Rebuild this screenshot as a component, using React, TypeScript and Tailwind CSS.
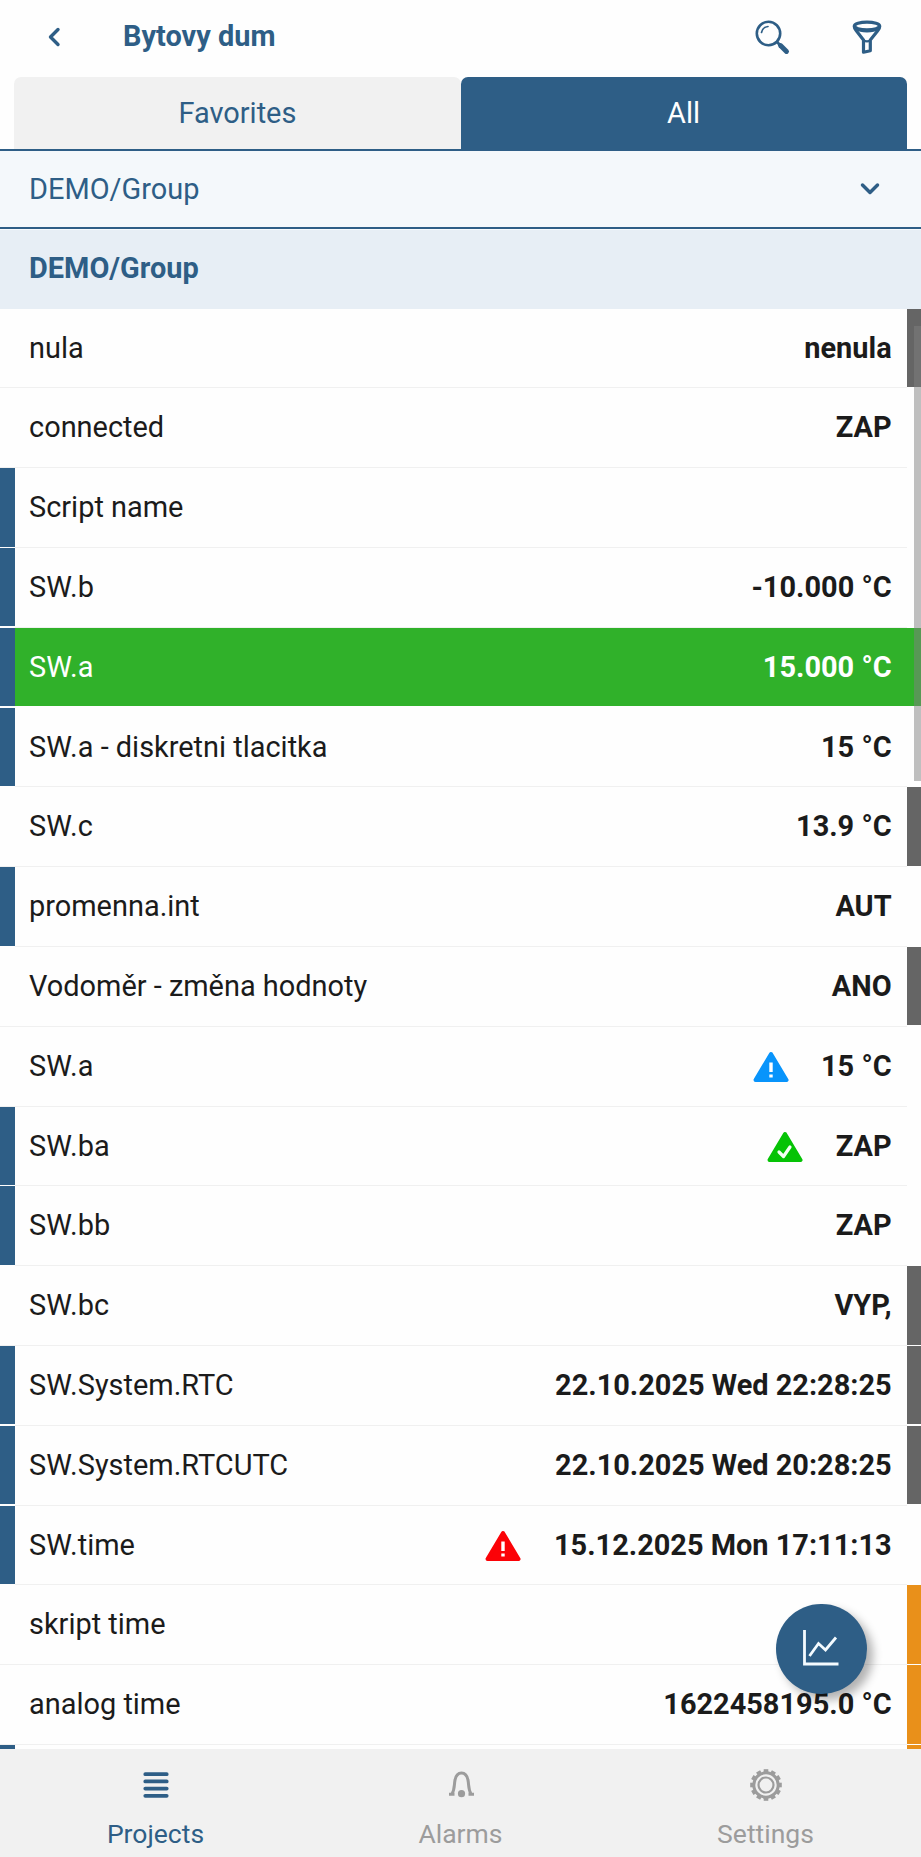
import React from "react";

type Alarm = "info" | "ok" | "alert";
type Row = { name: string; value?: string; left?: boolean; right?: "gray" | "orange"; alarm?: Alarm; active?: boolean };

const rows: Row[] = [
  { name: "nula", value: "nenula", right: "gray" },
  { name: "connected", value: "ZAP" },
  { name: "Script name", left: true },
  { name: "SW.b", value: "-10.000 °C", left: true },
  { name: "SW.a", value: "15.000 °C", left: true, active: true },
  { name: "SW.a - diskretni tlacitka", value: "15 °C", left: true },
  { name: "SW.c", value: "13.9 °C", right: "gray" },
  { name: "promenna.int", value: "AUT", left: true },
  { name: "Vodoměr - změna hodnoty", value: "ANO", right: "gray" },
  { name: "SW.a", value: "15 °C", alarm: "info" },
  { name: "SW.ba", value: "ZAP", left: true, alarm: "ok" },
  { name: "SW.bb", value: "ZAP", left: true },
  { name: "SW.bc", value: "VYP,", right: "gray" },
  { name: "SW.System.RTC", value: "22.10.2025 Wed 22:28:25", left: true, right: "gray" },
  { name: "SW.System.RTCUTC", value: "22.10.2025 Wed 20:28:25", left: true, right: "gray" },
  { name: "SW.time", value: "15.12.2025 Mon 17:11:13", left: true, alarm: "alert" },
  { name: "skript time", right: "orange" },
  { name: "analog time", value: "1622458195.0 °C", right: "orange" },
  { name: "", left: true, right: "orange" },
];

const alarmColors: Record<Alarm, string> = { info: "#0894fb", ok: "#06c306", alert: "#fb0207" };

function AlarmIcon({ kind }: { kind: Alarm }) {
  const color = alarmColors[kind];
  return (
    <svg className="mt-[2px] mr-[32.5px] h-[32px] w-[36px] shrink-0" viewBox="0 0 36 32" fill="none">
      <path d="M18 3 33.500 29H2.500Z" fill={color} stroke={color} strokeWidth="4" strokeLinejoin="round" />
      {kind === "ok" ? (
        <path d="m12 21 4.500 4.500L23 16" stroke="#f4fff4" strokeWidth="3.200" strokeLinecap="round" strokeLinejoin="round" />
      ) : (
        <path d="M18 11.500v9.500M18 23.500v3" stroke="#fff" strokeWidth="3.400" />
      )}
    </svg>
  );
}

function ListRow({ row }: { row: Row }) {
  return (
    <div className="flex h-[79.8px] shrink-0 items-stretch">
      <div className={row.left ? "mb-[1.4px] w-[14.5px] bg-[#2e5e86]" : "w-[14.5px] border-b-[1.5px] border-[#f0f0f0]"} />
      <div
        className={
          row.active
            ? "mb-[1.4px] -mr-[14.4px] flex flex-1 items-center justify-between bg-[#30b12a] pr-[29.4px] pb-[1px] pl-[14.5px] text-white"
            : "flex flex-1 items-center justify-between border-b-[1.5px] border-[#f0f0f0] pr-[15px] pb-[1px] pl-[14.5px] text-[#1b1b1b]"
        }
      >
        <span>{row.name}</span>
        <span className="flex items-center font-bold">
          {row.alarm && <AlarmIcon kind={row.alarm} />}
          <span>{row.value}</span>
        </span>
      </div>
      <div
        className={
          row.right === "gray"
            ? "mb-[1.4px] w-[14.4px] bg-[#656565]"
            : row.right === "orange"
              ? "mb-[1.4px] w-[14.4px] bg-[#e9901a]"
              : "w-[14.4px]"
        }
      />
    </div>
  );
}

function GearIcon() {
  return (
    <svg className="h-[32px] w-[32px]" viewBox="-16 -16 32 32" fill="none" stroke="#9c9c9c">
      <circle r="12.200" strokeWidth="3" />
      <circle r="7.500" strokeWidth="2.200" />
      {[0, 30, 60, 90, 120, 150, 180, 210, 240, 270, 300, 330].map((a) => (
        <path key={a} d="M-2.300 -14.400h4.600" strokeWidth="2.800" transform={`rotate(${a})`} />
      ))}
    </svg>
  );
}

export default function App() {
  return (
    <div className="relative flex h-[1857px] w-[921px] flex-col overflow-hidden bg-[#fefefe] font-[Roboto,sans-serif] text-[28.93px] leading-[34px]">
      <header className="flex h-[77px] shrink-0 items-center pb-[4px] text-[#2e5e86]">
        <svg className="ml-[46px] h-[20px] w-[16px]" viewBox="0 0 16 20" fill="none">
          <path d="M12 2.500 4.500 10l7.500 7.500" stroke="currentColor" strokeWidth="3.400" strokeLinecap="round" strokeLinejoin="round" />
        </svg>
        <h1 className="ml-[61px] flex-1 pb-[1px] font-bold">Bytovy dum</h1>
        <svg className="mr-[61px] h-[36px] w-[36px]" viewBox="0 0 36 36" fill="none" stroke="currentColor">
          <circle cx="14.500" cy="14.500" r="11.700" strokeWidth="2.600" />
          <path d="M7.500 13.500a7.500 7.500 0 0 1 6.500-6" strokeWidth="1.700" strokeLinecap="round" />
          <path d="m23 23 4 4" strokeWidth="2.800" />
          <path d="m26.500 26.500 6 6" strokeWidth="4.900" strokeLinecap="round" />
        </svg>
        <svg className="mr-[38px] h-[36px] w-[32px]" viewBox="0 0 32 36" fill="none" stroke="currentColor" strokeLinejoin="round">
          <ellipse cx="16" cy="7" rx="12.700" ry="3.800" strokeWidth="3.200" />
          <path d="M3.300 7.500c0 2 1 3 2.200 4.500L12.500 21v12.200l6.800-1.400V21l7.200-9c1.200-1.500 2.200-2.500 2.200-4.500" strokeWidth="3.200" />
          <path d="M5 10c5 3 17 3 22 0" strokeWidth="2.600" />
          <path d="M12.500 21.500c2 1 5 1 7 0" strokeWidth="2" />
        </svg>
      </header>

      <div className="flex h-[72px] shrink-0 px-[14.400px]">
        <div className="flex flex-1 items-center justify-center rounded-t-[7px] bg-[#f1f1f1] pb-[1px] text-[#2e5e86]">Favorites</div>
        <div className="flex flex-1 items-center justify-center rounded-t-[7px] bg-[#2e5e86] pb-[1px] text-white">All</div>
      </div>

      <div className="flex h-[80px] shrink-0 items-center justify-between border-y-2 border-[#2e5e86] bg-[#f4f8fb] pr-[41px] pb-[1px] pl-[29px] text-[#2e5e86]">
        <span>DEMO/Group</span>
        <svg className="mt-[1px] h-[14px] w-[20px]" viewBox="0 0 20 14" fill="none">
          <path d="m2.500 3 7.500 7.500L17.500 3" stroke="currentColor" strokeWidth="3.500" strokeLinecap="round" strokeLinejoin="round" />
        </svg>
      </div>

      <main className="flex min-h-0 flex-1 flex-col overflow-hidden">
        <div className="flex h-[79.7px] shrink-0 items-center border-t border-[#f7fafc] bg-[#e7eef5] pb-[2px] pl-[29px] font-bold text-[#2e5e86]">DEMO/Group</div>
        {rows.map((row, i) => (
          <ListRow key={i} row={row} />
        ))}
      </main>

      <nav className="grid h-[108px] shrink-0 grid-cols-3 bg-[#f1f1f1] px-[3px] text-[26.5px] text-[#9c9c9c]">
        <div className="flex flex-col items-center pt-[20px] text-[#2e5e86]">
          <svg className="h-[32px] w-[26px]" viewBox="0 0 26 32" fill="none" stroke="currentColor" strokeWidth="3.800" strokeLinecap="round">
            <path d="M2.300 5.200h21.400M2.300 12.400h21.400M2.300 19.600h21.400M2.300 26.800h21.400" />
          </svg>
          <span className="mt-[16px]">Projects</span>
        </div>
        <div className="flex flex-col items-center pt-[20px]">
          <svg className="h-[32px] w-[28px]" viewBox="0 0 28 32" fill="none" stroke="currentColor">
            <path d="M2 25.300h5.500M21.500 25.300H27M5 25c2.300-4 2.200-7.500 2.700-12 .6-5.500 3-9 6.800-9s6.200 3.500 6.800 9c.5 4.500.4 8 2.700 12" strokeWidth="3" />
            <circle cx="14.500" cy="24.700" r="3.600" fill="currentColor" stroke="none" />
          </svg>
          <span className="mt-[16px]">Alarms</span>
        </div>
        <div className="flex flex-col items-center pt-[20px]">
          <GearIcon />
          <span className="mt-[16px]">Settings</span>
        </div>
      </nav>

      <div className="absolute top-[326px] right-0 h-[455px] w-[7px] bg-[#7f7f7f]/50" />
      <button className="absolute top-[1603.5px] left-[776px] flex h-[90.5px] w-[90.5px] items-center justify-center rounded-full bg-[#2e5e86] shadow-[6px_6px_10px_rgba(0,0,0,0.3)]">
        <svg className="mt-[-2px] mr-[2px] h-[40px] w-[40px]" viewBox="0 0 40 40" fill="none" stroke="#f4fbff">
          <path d="M4.500 2v34h34" strokeWidth="2.800" />
          <path d="m9.500 28 9-12.500 7 6.500L36 9.500" strokeWidth="2.800" />
        </svg>
      </button>
    </div>
  );
}
